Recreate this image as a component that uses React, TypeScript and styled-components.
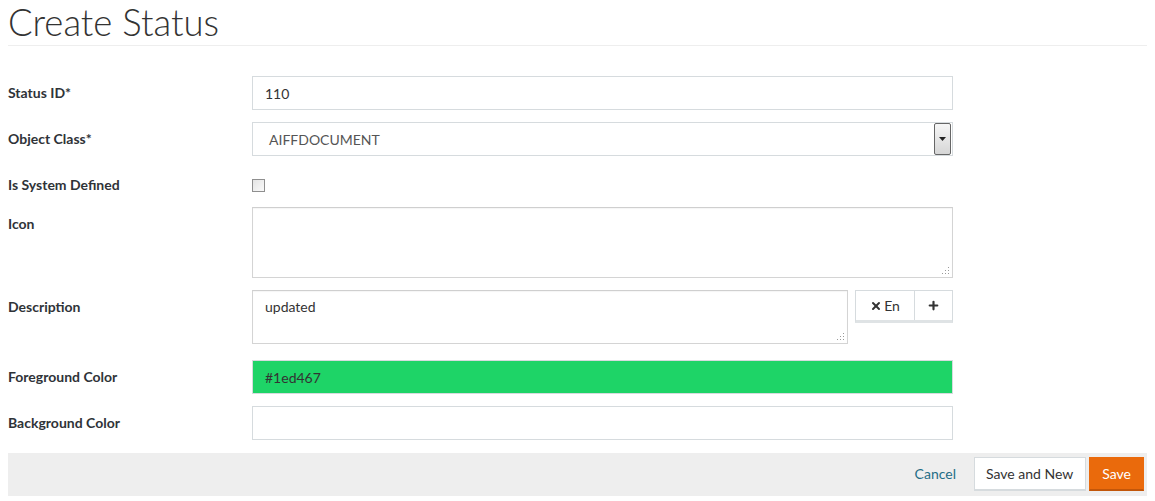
import React from "react";
import styled, { createGlobalStyle } from "styled-components";
import { X, Plus } from "lucide-react";

const Global = createGlobalStyle`
	html, body {
		margin: 0;
		background: #fff;
	}
	body {
		padding: 0 8px;
		font-family: "Lato", "Open Sans", sans-serif;
		color: #333;
	}
`;

const Page = styled.div`
	display: flex;
	flex-direction: column;
`;

const Title = styled.h1`
	margin: 0;
	font-weight: 300;
	font-size: 36.5px;
	line-height: 44px;
	color: #333;
	padding-bottom: 1px;
	border-bottom: 1px solid #eee;
`;

const Form = styled.div`
	display: flex;
	flex-direction: column;
	padding-top: 30px;
`;

const Row = styled.div<{ $gap?: number }>`
	display: grid;
	grid-template-columns: 244px 701px;
	margin-bottom: ${(p) => (p.$gap ?? 12)}px;
`;

const Label = styled.label`
	font-size: 14px;
	font-weight: bold;
	line-height: 20px;
	padding-top: 7px;
	color: #2f3338;
`;

const TextInput = styled.div<{ $bg?: string }>`
	box-sizing: border-box;
	height: 34px;
	border: 1px solid #d6dbde;
	background: ${(p) => p.$bg || "#fff"};
	padding: 0 12px;
	display: flex;
	align-items: center;
	font-size: 14px;
	color: #333;
`;

const Select = styled(TextInput)`
	padding: 0 1px 0 16px;
	justify-content: space-between;
	color: #555;
`;

const Arrow = styled.div`
	box-sizing: border-box;
	width: 17px;
	height: 32px;
	border: 1px solid #666;
	border-radius: 2px;
	background: linear-gradient(#f6f6f6, #d6d6d6);
	display: flex;
	align-items: center;
	justify-content: center;
`;

const CheckCell = styled.div`
	padding-top: 11px;
	height: 16px;
`;

const CheckBox = styled.div`
	box-sizing: border-box;
	width: 13px;
	height: 13px;
	border: 1px solid #8f8f8f;
	background: linear-gradient(135deg, #e4e4e4, #fafafa);
`;

const Area = styled.div<{ $h: number; $w?: number }>`
	position: relative;
	box-sizing: border-box;
	height: ${(p) => p.$h}px;
	width: ${(p) => (p.$w ? `${p.$w}px` : "auto")};
	border: 1px solid #d4d4d4;
	border-top-color: #cfcfcf;
	box-shadow: inset 0 1px 1px rgba(0, 0, 0, 0.04);
	padding: 7px 12px;
	font-size: 14px;
	line-height: 18px;
	color: #333;
	background: #fff;
`;

const Grip = styled.svg`
	position: absolute;
	right: 2px;
	bottom: 2px;
`;

const DescCell = styled.div`
	display: flex;
	align-items: flex-start;
	justify-content: space-between;
`;

const BtnGroup = styled.div`
	display: flex;
	box-sizing: border-box;
	height: 33px;
	border: 1px solid #d6dbde;
	border-bottom: 3px solid #dfe3e5;
`;

const GroupBtn = styled.div<{ $w: number; $last?: boolean }>`
	width: ${(p) => p.$w}px;
	display: flex;
	align-items: center;
	justify-content: center;
	gap: 2px;
	font-size: 14px;
	color: #333;
	border-right: ${(p) => (p.$last ? "none" : "1px solid #d6dbde")};
`;

const Footer = styled.div`
	display: flex;
	justify-content: flex-end;
	align-items: flex-start;
	box-sizing: border-box;
	height: 43px;
	margin-top: 1px;
	padding: 4px 3px 0 0;
	background: #eee;
`;

const CancelLink = styled.span`
	color: #1f6d86;
	font-size: 14px;
	line-height: 34px;
	margin-right: 15px;
`;

const Button = styled.div<{ $primary?: boolean }>`
	box-sizing: border-box;
	height: 34px;
	display: flex;
	align-items: center;
	padding: ${(p) => (p.$primary ? "0 12px" : "0 12px 0 11px")};
	font-size: 14px;
	margin-left: 3px;
	background: ${(p) => (p.$primary ? "#ea6a0c" : "#fff")};
	color: ${(p) => (p.$primary ? "#fff" : "#333")};
	border: 1px solid ${(p) => (p.$primary ? "#ea6a0c" : "#d6dbde")};
	border-bottom: 2px solid ${(p) => (p.$primary ? "#c2560a" : "#d6dbde")};
`;

const ResizeGrip = () => (
	<Grip width="8" height="8" viewBox="0 0 8 8">
		<g fill="#9a9a9a">
			<rect x="6" y="0" width="1" height="1" />
			<rect x="3" y="3" width="1" height="1" />
			<rect x="6" y="3" width="1" height="1" />
			<rect x="0" y="6" width="1" height="1" />
			<rect x="3" y="6" width="1" height="1" />
			<rect x="6" y="6" width="1" height="1" />
		</g>
	</Grip>
);

export default function App() {
	return (
		<Page>
			<Global />
			<Title>Create Status</Title>
			<Form>
				<Row>
					<Label>Status ID*</Label>
					<TextInput>110</TextInput>
				</Row>
				<Row>
					<Label>Object Class*</Label>
					<Select>
						AIFFDOCUMENT
						<Arrow>
							<svg width="7" height="4" viewBox="0 0 7 4">
								<path d="M0 0h7L3.5 4z" fill="#222" />
							</svg>
						</Arrow>
					</Select>
				</Row>
				<Row>
					<Label>Is System Defined</Label>
					<CheckCell>
						<CheckBox />
					</CheckCell>
				</Row>
				<Row>
					<Label>Icon</Label>
					<Area $h={71}>
						<ResizeGrip />
					</Area>
				</Row>
				<Row $gap={16}>
					<Label>Description</Label>
					<DescCell>
						<Area $h={54} $w={596}>
							updated
							<ResizeGrip />
						</Area>
						<BtnGroup>
							<GroupBtn $w={58}>
								<X size={12} strokeWidth={4} color="#333" />
								En
							</GroupBtn>
							<GroupBtn $w={37} $last>
								<Plus size={13} strokeWidth={4} color="#333" />
							</GroupBtn>
						</BtnGroup>
					</DescCell>
				</Row>
				<Row>
					<Label>Foreground Color</Label>
					<TextInput $bg="#1ed467">#1ed467</TextInput>
				</Row>
				<Row>
					<Label>Background Color</Label>
					<TextInput />
				</Row>
			</Form>
			<Footer>
				<CancelLink>Cancel</CancelLink>
				<Button>Save and New</Button>
				<Button $primary>Save</Button>
			</Footer>
		</Page>
	);
}
